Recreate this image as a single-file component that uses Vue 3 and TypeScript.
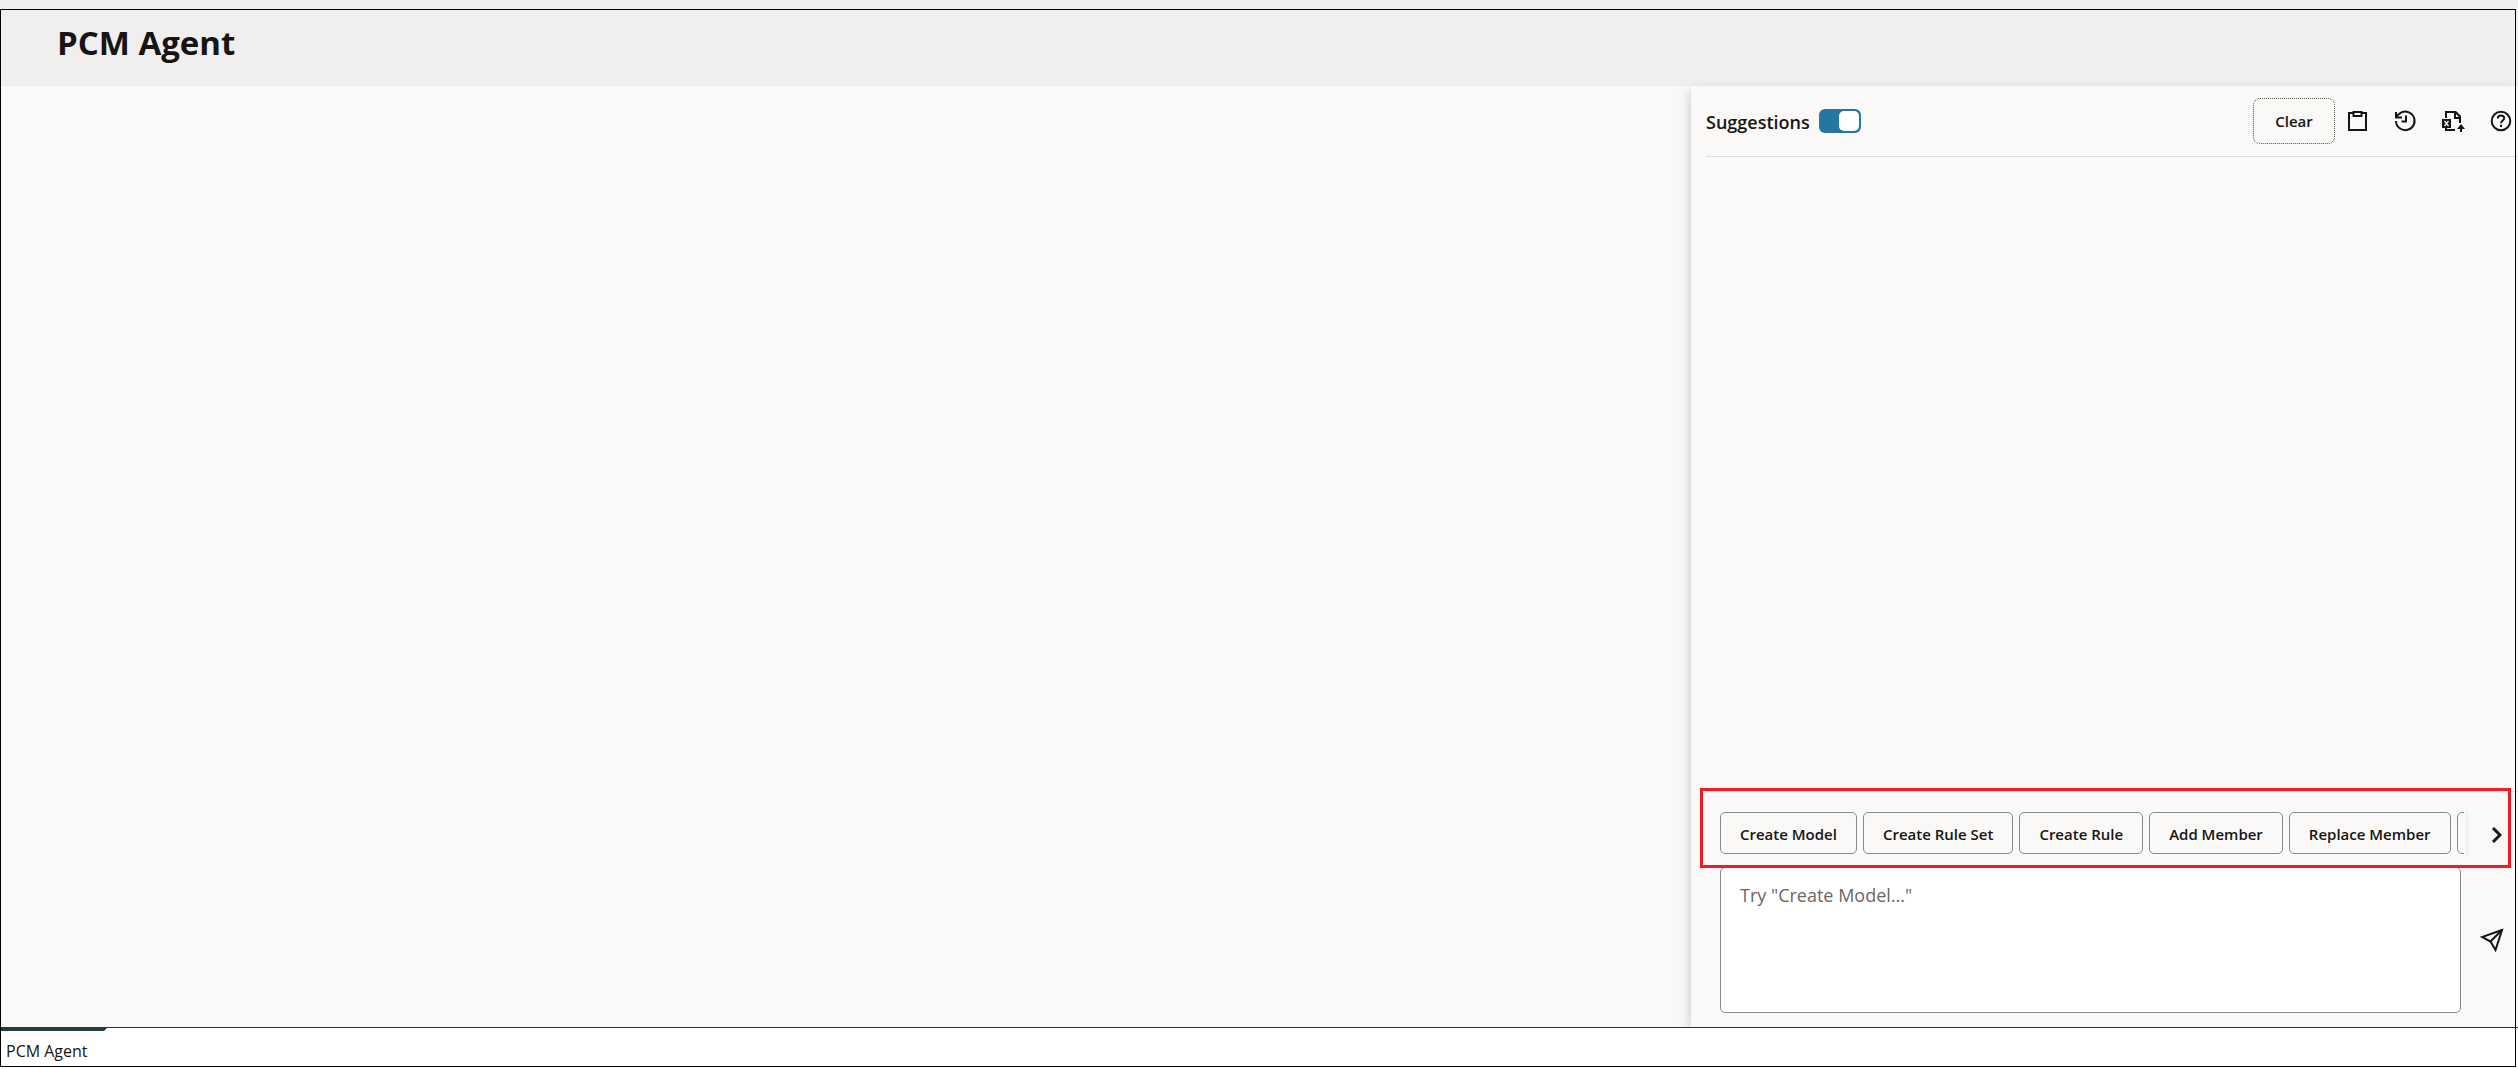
<script setup lang="ts">
import { ref } from 'vue'

const suggestionsOn = ref(true)
const prompt = ref('')
const suggestions = ['Create Model', 'Create Rule Set', 'Create Rule', 'Add Member', 'Replace Member', '']
</script>

<template>
  <div class="page">
    <header class="top">
      <h1>PCM Agent</h1>
    </header>

    <main class="body">
      <section class="canvas" aria-label="Workspace"></section>

      <aside class="panel">
        <div class="toolbar">
          <label class="toggle">
            <span>Suggestions</span>
            <input v-model="suggestionsOn" type="checkbox" role="switch" />
          </label>
          <div class="actions">
            <button class="clear" type="button">Clear</button>
            <button class="icon" type="button" aria-label="Copy to clipboard">
              <svg viewBox="0 0 24 24" fill="none" stroke="currentColor" stroke-width="2">
                <path d="M8 4H4v17h17V4h-4" />
                <path d="M8.500 3h8v4h-8z" />
              </svg>
            </button>
            <button class="icon" type="button" aria-label="History">
              <svg viewBox="0 0 24 24" fill="none" stroke="currentColor" stroke-width="2">
                <path d="M3 12a9.300 9.300 0 1 0 3-7L3 8" />
                <path d="M3 3v5.500h6" />
                <path d="M13 6.500v6H8.500" />
              </svg>
            </button>
            <button class="icon" type="button" aria-label="Export to spreadsheet">
              <svg viewBox="0 0 24 24">
                <path d="M5 9V3h9l5 5v6M5 19v2h9" fill="none" stroke="currentColor" stroke-width="2" />
                <path d="M13 2h2l5 5v3h-7z" fill="currentColor" />
                <path d="M15 5v3h3z" fill="#fbf9f8" />
                <path d="M1 10h9v9H1z" fill="currentColor" />
                <path d="M3.500 12l4 5M7.500 12l-4 5" stroke="#fbf9f8" stroke-width="1.300" />
                <path d="M20 15l4 5h-3v3h-2v-3h-3z" fill="currentColor" />
              </svg>
            </button>
            <button class="icon" type="button" aria-label="Help">
              <svg viewBox="0 0 24 24" fill="none" stroke="currentColor" stroke-width="2">
                <circle cx="12" cy="12" r="9.300" />
                <path d="M8.800 9.500c0-4.200 6.400-4 6.400-.3 0 2.300-3.200 2.300-3.200 5" />
                <path d="M12 15.700v2.200" />
              </svg>
            </button>
          </div>
        </div>

        <div class="thread"></div>

        <div class="composer">
          <div class="chips-row">
            <div class="chips">
              <button v-for="s in suggestions" :key="s" class="chip" type="button">{{ s }}</button>
            </div>
            <button class="next" type="button" aria-label="More suggestions">
              <svg viewBox="0 0 12 18" fill="none" stroke="currentColor" stroke-width="3">
                <path d="M3 2l7 7-7 7" />
              </svg>
            </button>
            <div class="highlight"></div>
          </div>
          <div class="entry">
            <textarea v-model="prompt" aria-label="Message" placeholder='Try "Create Model..."'></textarea>
            <button class="send" type="button" aria-label="Send">
              <svg viewBox="0 0 24 24" fill="none" stroke="currentColor" stroke-width="2">
                <path d="M22 2L2 9l8.500 4.500L15.500 22z" />
                <path d="M22 2L10.500 13.500" />
              </svg>
            </button>
          </div>
        </div>
      </aside>
    </main>

    <footer class="tabs">
      <a class="tab" href="#">PCM Agent</a>
    </footer>
    <div class="frame"></div>
  </div>
</template>

<style>
body {
  margin: 0;
  background: #fff;
}
</style>

<style scoped>
* {
  box-sizing: border-box;
}
.page {
  position: relative;
  display: flex;
  flex-direction: column;
  min-height: 100vh;
  overflow: hidden;
  color: #161513;
  font-family: 'Open Sans', 'Noto Sans', sans-serif;
}
button {
  padding: 0;
  border: 0;
  background: none;
  color: inherit;
  font: inherit;
}
svg {
  display: block;
}
.top {
  height: 86px;
  padding: 20px 57px;
  background: #f0efed;
}
h1 {
  margin: 0;
  font-size: 33px;
  line-height: 46px;
  font-weight: 700;
}
.body {
  flex: 1;
  display: grid;
  grid-template-columns: minmax(0, 1691fr) minmax(0, 827fr);
  background: #fbf9f8;
}
.panel {
  display: flex;
  flex-direction: column;
  min-width: 0;
  padding-left: 15px;
  background: #fbf9f8;
  box-shadow: -2px 4px 10px rgba(0, 0, 0, 0.16);
}
.toolbar {
  display: flex;
  align-items: center;
  justify-content: space-between;
  height: 71px;
  border-bottom: 1px solid #dedddb;
}
.toggle {
  display: flex;
  align-items: center;
  gap: 9px;
  font-size: 18px;
  line-height: 24px;
  font-weight: 600;
}
.toggle span {
  padding-top: 2px;
}
.toggle input {
  appearance: none;
  display: flex;
  justify-content: flex-start;
  width: 42px;
  height: 24px;
  margin: 0;
  padding: 2px;
  border-radius: 6px;
  background: #8b8580;
}
.toggle input:checked {
  justify-content: flex-end;
  background: #2577a1;
}
.toggle input::before {
  content: '';
  width: 20px;
  height: 20px;
  border-radius: 5px;
  background: #fff;
}
.actions {
  display: flex;
  align-items: center;
  gap: 24px;
  padding-right: 5px;
}
.clear {
  width: 82px;
  height: 46px;
  margin-right: -14px;
  border: 1px dotted #55534f;
  border-radius: 7px;
  font-size: 15px;
  font-weight: 600;
}
.icon svg {
  width: 24px;
  height: 24px;
}
.thread {
  flex: 1;
}
.composer {
  border-top: 1px solid #e2e0de;
}
.chips-row {
  position: relative;
  display: flex;
  align-items: center;
  height: 75px;
  padding: 6px 16px 0 14px;
}
.chips {
  flex: 1;
  display: flex;
  gap: 6px;
  min-width: 0;
  overflow: hidden;
}
.chip {
  flex: none;
  height: 42px;
  padding: 2px 19px 0;
  border: 1px solid #8b8988;
  border-radius: 5px;
  font-size: 15px;
  line-height: 24px;
  font-weight: 600;
  white-space: nowrap;
}
.next {
  display: flex;
  align-items: center;
  justify-content: flex-end;
  width: 36px;
  height: 46px;
  margin-left: 2px;
  padding-top: 4px;
  border-left: 2px solid #f0efed;
}
.next svg {
  width: 12px;
  height: 18px;
}
.highlight {
  position: absolute;
  top: -4px;
  right: 7px;
  bottom: -1px;
  left: -6px;
  border: 3px solid #ee1c25;
  pointer-events: none;
}
.entry {
  display: flex;
  align-items: center;
  padding: 0 14px 14px 14px;
}
textarea {
  flex: 1;
  min-width: 0;
  height: 146px;
  padding: 15px 19px;
  border: 1px solid #8b8988;
  border-radius: 5px;
  background: #fff;
  color: inherit;
  font: inherit;
  font-size: 18px;
  line-height: 24px;
  resize: none;
}
textarea::placeholder {
  color: #6b6661;
  opacity: 1;
}
.send {
  margin-left: 19px;
}
.send svg {
  width: 24px;
  height: 24px;
}
.tabs {
  position: relative;
  height: 42px;
  border-top: 1px solid #22343a;
  background: #fff;
}
.tab {
  display: block;
  width: 108px;
  margin-top: -1px;
  padding: 8px 6px;
  border-top: 4px solid #223a41;
  border-right: 4px solid transparent;
  color: inherit;
  font-size: 16px;
  line-height: 24px;
  text-decoration: none;
  white-space: nowrap;
}
.frame {
  position: absolute;
  inset: 9px 2px 2px 0;
  border: 1px solid #000;
  pointer-events: none;
}
</style>
